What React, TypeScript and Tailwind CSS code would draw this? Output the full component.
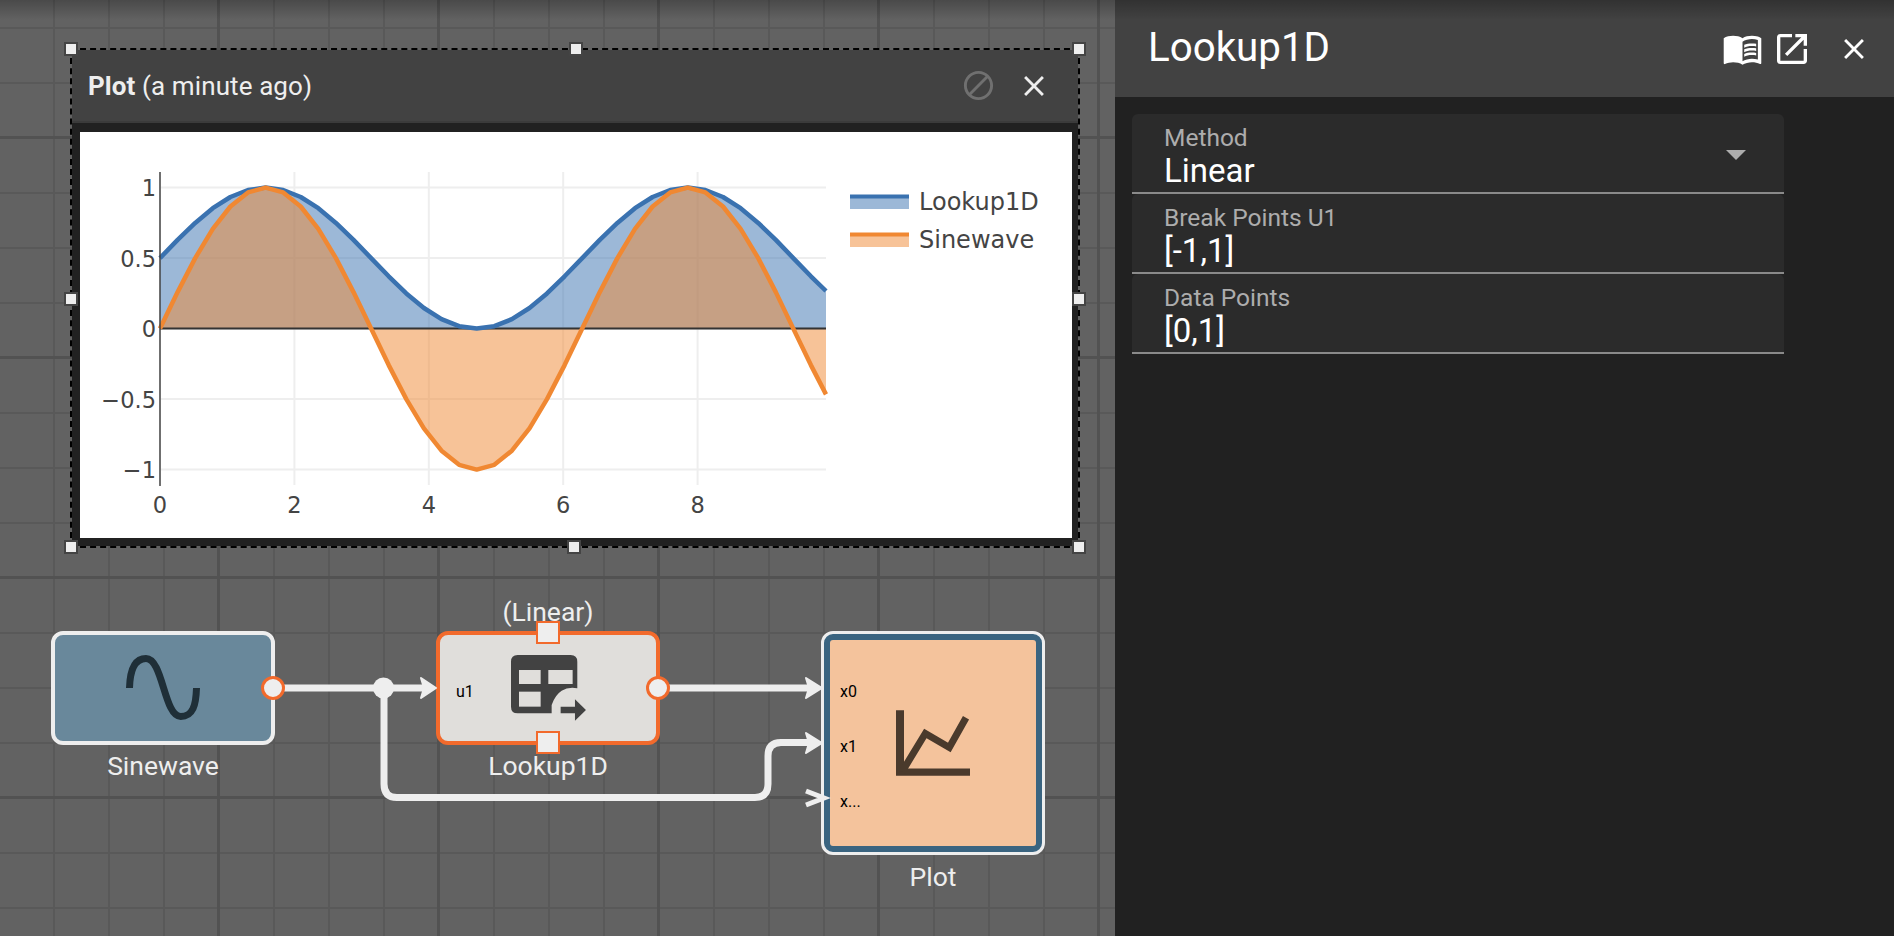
import { useMemo } from "react";

const PLOT_W = 666;
const X0 = 160;
const Y0 = 328.6;
const XS = 67.2;
const YS = 141;

const xTicks = [0, 2, 4, 6, 8];
const yTicks: [number, string][] = [
  [1, "1"],
  [0.5, "0.5"],
  [0, "0"],
  [-0.5, "−0.5"],
  [-1, "−1"],
];

function tracePoints(fn: (t: number) => number) {
  const pts: string[] = [];
  for (let i = 0; i <= 38; i++) {
    const t = Math.min((i * Math.PI) / 12, 9.91);
    pts.push(`${(X0 + t * XS).toFixed(1)},${(Y0 - fn(t) * YS).toFixed(1)}`);
  }
  return pts;
}

function Chart() {
  const sine = useMemo(() => tracePoints((t) => Math.sin(t)), []);
  const lookup = useMemo(() => tracePoints((t) => (Math.sin(t) + 1) / 2), []);
  const end = X0 + PLOT_W;

  const area = (pts: string[]) => `${X0},${Y0} ${pts.join(" ")} ${end},${Y0}`;

  return (
    <svg viewBox="80 132 992 406" className="block h-full w-full" style={{ fontFamily: "'DejaVu Sans', sans-serif" }}>
      {xTicks.map((t) => (
        <line key={t} x1={X0 + t * XS} x2={X0 + t * XS} y1={172} y2={485} stroke="#eeeeee" strokeWidth={2} />
      ))}
      {yTicks.map(([v]) => (
        <line key={v} x1={X0} x2={end} y1={Y0 - v * YS} y2={Y0 - v * YS} stroke="#eeeeee" strokeWidth={2} />
      ))}

      <polygon points={area(lookup)} fill="#3a72b0" fillOpacity={0.5} />
      <polygon points={area(sine)} fill="#f08832" fillOpacity={0.5} />
      <line x1={X0} x2={end} y1={Y0} y2={Y0} stroke="#333333" strokeWidth={2} />
      <polyline points={lookup.join(" ")} fill="none" stroke="#3a72b0" strokeWidth={4.5} strokeLinejoin="round" />
      <polyline points={sine.join(" ")} fill="none" stroke="#f08832" strokeWidth={4.5} strokeLinejoin="round" />

      <line x1={X0} x2={X0} y1={172} y2={486} stroke="#444444" strokeWidth={1.5} />

      {xTicks.map((t) => (
        <text key={t} x={X0 + t * XS} y={512.5} textAnchor="middle" fontSize={22.5} fill="#444444">
          {t}
        </text>
      ))}
      {yTicks.map(([v, label]) => (
        <text key={v} x={156} y={Y0 - v * YS + 8.5} textAnchor="end" fontSize={22.5} fill="#444444">
          {label}
        </text>
      ))}

      <rect x={850} y={195} width={59} height={14} fill="#3a72b0" fillOpacity={0.5} />
      <rect x={850} y={194.5} width={59} height={4} fill="#3a72b0" />
      <text x={919} y={210} fontSize={24} fill="#444444">
        Lookup1D
      </text>
      <rect x={850} y={233} width={59} height={14} fill="#f08832" fillOpacity={0.5} />
      <rect x={850} y={232.5} width={59} height={4} fill="#f08832" />
      <text x={919} y={248} fontSize={24} fill="#444444">
        Sinewave
      </text>
    </svg>
  );
}

function Handle({ className }: { className: string }) {
  return <div className={`absolute h-[14px] w-[14px] -translate-x-1/2 -translate-y-1/2 border-[2.5px] border-[#444444] bg-[#eeeeee] ${className}`} />;
}

function PlotWindow() {
  return (
    <div className="absolute left-[70px] top-[48px] z-20 h-[500px] w-[1010px] border-2 border-dashed border-black">
      <div className="flex h-full flex-col bg-[#212121]">
        <div className="flex h-[73px] items-center bg-[#424242] pb-[2px] pl-[16px] pr-[27px] shadow-[inset_0_-2px_0_#3b3b3b]">
          <div className="flex-1 text-[26px] leading-none tracking-[0.1px] text-[#eeeeee]">
            <span className="font-bold">Plot</span> <span>(a minute ago)</span>
          </div>
          <svg viewBox="0 0 24 24" className="mr-[21px] h-[35px] w-[35px] fill-[#707070]">
            <path d="M12 2C6.48 2 2 6.48 2 12s4.48 10 10 10 10-4.48 10-10S17.52 2 12 2zM4 12c0-4.42 3.58-8 8-8 1.85 0 3.55.63 4.9 1.69L5.69 16.9C4.63 15.55 4 13.85 4 12zm8 8c-1.85 0-3.55-.63-4.9-1.69L18.31 7.1C19.37 8.45 20 10.15 20 12c0 4.42-3.58 8-8 8z" />
          </svg>
          <svg viewBox="0 0 24 24" className="h-[34px] w-[34px] fill-[#eeeeee]">
            <path d="M19 6.41L17.59 5 12 10.59 6.41 5 5 6.41 10.59 12 5 17.59 6.41 19 12 13.41 17.59 19 19 17.59 13.41 12z" />
          </svg>
        </div>
        <div className="mb-2 ml-2 mr-1.5 mt-[9px] flex-1 bg-white">
          <Chart />
        </div>
      </div>
      <Handle className="left-[-1px] top-[-1px]" />
      <Handle className="left-[504px] top-[-1px]" />
      <Handle className="left-[1007px] top-[-1px]" />
      <Handle className="left-[-1px] top-[249px]" />
      <Handle className="left-[1007px] top-[249px]" />
      <Handle className="left-[-1px] top-[497px]" />
      <Handle className="left-[502px] top-[497px]" />
      <Handle className="left-[1007px] top-[497px]" />
    </div>
  );
}

function Wires() {
  return (
    <svg viewBox="0 0 1114 936" className="absolute left-0 top-0 z-10 h-[936px] w-[1114px]">
      <g fill="none" stroke="#eeeeee" strokeWidth={7}>
        <path d="M273 688H425" />
        <path d="M658 688H812" />
        <path d="M384 688V784Q384 797.5 397 797.5H755Q768 797.5 768 784V756Q768 742.5 781 742.5H812" />
        <path d="M806 791L824 798L806 805" strokeWidth={5} />
      </g>
      <g fill="#eeeeee" stroke="#eeeeee" strokeWidth={2} strokeLinejoin="round">
        <path d="M421 678L436 688L421 698L424 688Z" />
        <path d="M806 678L822 688L806 698L809 688Z" />
        <path d="M806 733L822 743L806 753L809 743Z" />
      </g>
      <circle cx={383.5} cy={688} r={10.5} fill="#eeeeee" />
    </svg>
  );
}

function Port() {
  return <div className="absolute right-[-4px] top-[53px] z-20 h-[24px] w-[24px] -translate-y-1/2 translate-x-[10px] rounded-full border-[3px] border-[#f26a2c] bg-[#eeeeee]" />;
}

function SquarePort({ className }: { className: string }) {
  return <div className={`absolute left-[96px] z-20 h-[23px] w-[24px] border-2 border-[#f26a2c] bg-[#eeeeee] ${className}`} />;
}

function Label({ children, className }: { children: string; className: string }) {
  return <div className={`whitespace-nowrap text-[26.5px] leading-[32px] text-[#eeeeee] ${className}`}>{children}</div>;
}

function SinewaveBlock() {
  return (
    <div className="absolute left-[51px] top-[631px] flex w-[224px] flex-col items-center">
      <div className="relative h-[114px] w-full rounded-[12px] border-4 border-[#eeeeee] bg-[#69889b]">
        <svg viewBox="0 0 224 114" className="absolute left-[-4px] top-[-4px] h-[114px] w-[224px]">
          <path
            d="M78.500 57C79 40 83 27.500 95 27.500C112 27.500 113 85.500 129.700 85.500C142 85.500 145 74 145.500 57"
            fill="none"
            stroke="#1f2f38"
            strokeWidth={7}
          />
        </svg>
        <Port />
      </div>
      <Label className="mt-[5px]">Sinewave</Label>
    </div>
  );
}

function LookupBlock() {
  return (
    <div className="absolute left-[436px] top-[596px] flex w-[224px] flex-col items-center">
      <Label className="mb-[3px]">(Linear)</Label>
      <div className="relative flex h-[114px] w-full items-center justify-center rounded-[12px] border-4 border-[#f26a2c] bg-[#e0dedb]">
        <span className="absolute left-[16px] top-[45px] text-[16px] leading-[24px] text-black">u1</span>
        <svg viewBox="273 195 226 198" className="ml-[1px] h-[66px] w-[75.300px]">
          <path
            d="M293 195H452Q472 195 472 215V295Q445 290 425 302Q405 315 395 345V370H293Q273 370 273 350V215Q273 195 293 195Z"
            fill="#424242"
          />
          <rect x={297} y={240} width={65} height={42} fill="#e0dedb" />
          <rect x={385} y={240} width={73} height={42} fill="#e0dedb" />
          <rect x={297} y={305} width={65} height={45} fill="#e0dedb" />
          <path d="M422 350H465V328L498 360L465 392V370H422Z" fill="#424242" />
        </svg>
        <SquarePort className="top-[-14px]" />
        <SquarePort className="bottom-[-13px]" />
        <Port />
      </div>
      <Label className="mt-[5px]">Lookup1D</Label>
    </div>
  );
}

function PlotBlock() {
  return (
    <div className="absolute left-[821px] top-[631px] flex w-[224px] flex-col items-center">
      <div className="h-[224px] w-full rounded-[12px] border-[3.5px] border-[#eeeeee] bg-[#3a6480] p-[6px]">
        <div className="flex h-full w-full items-center rounded-[3px] bg-[#f4c39c] pl-[10px]">
          <div className="mt-[7px] flex w-[55.500px] flex-col gap-[31px] text-[16px] leading-[24px] text-black">
            <span>x0</span>
            <span>x1</span>
            <span>x...</span>
          </div>
          <svg viewBox="348 270 222 197" className="h-[66px] w-[74px]">
            <path d="M348 270H372V445H570V467H348Z" fill="#4a3a2c" />
            <path d="M366 455L436 340L508 382L558 293" fill="none" stroke="#4a3a2c" strokeWidth={21} />
          </svg>
        </div>
      </div>
      <Label className="mt-[6px]">Plot</Label>
    </div>
  );
}

function Field({ label, value }: { label: string; value: string }) {
  return (
    <div className="h-[80px] rounded-t-[6px] border-b-2 border-[#8a8a8a] bg-[#2b2b2b] pl-[32px] pr-5 pt-[9px]">
      <div className="mb-[1px] text-[24.500px] leading-[29px] text-[#adadad]">{label}</div>
      <div className="text-[33px] leading-[36px] text-white">{value}</div>
    </div>
  );
}

export default function App() {
  return (
    <div className="relative flex h-[936px] w-[1894px] overflow-hidden font-['Roboto',sans-serif]">
      <div className="relative h-full w-[1115px] bg-[#626262] bg-[linear-gradient(to_right,#525252_3px,transparent_3px),linear-gradient(to_bottom,#525252_3px,transparent_3px),linear-gradient(to_right,#595959_2px,transparent_2px),linear-gradient(to_bottom,#595959_2px,transparent_2px)] bg-[size:220px_220px,220px_220px,55px_55px,55px_55px] bg-[position:-3px_136px,0_136px,-2px_27px,0_27px]">
        <SinewaveBlock />
        <LookupBlock />
        <PlotBlock />
        <Wires />
        <PlotWindow />
      </div>

      <div className="flex h-full flex-1 flex-col bg-[#212121]">
        <div className="flex h-[97px] items-center bg-[#424242] pl-[33px] pr-[23px]">
          <div className="flex-1 text-[40.300px] leading-none text-white">Lookup1D</div>
          <svg viewBox="0 0 24 24" className="h-[41px] w-[41px] fill-white">
            <path d="M21 5c-1.11-.35-2.33-.5-3.5-.5-1.95 0-4.05.4-5.5 1.5-1.45-1.1-3.55-1.5-5.5-1.5S2.450 4.900 1 6v14.650c0 .25.25.5.5.5.1 0 .15-.05.25-.05C3.100 20.450 5.050 20 6.500 20c1.950 0 4.050.4 5.500 1.500 1.350-.85 3.800-1.500 5.500-1.500 1.650 0 3.350.3 4.750 1.050.1.05.15.05.25.05.25 0 .5-.25.5-.5V6c-.6-.45-1.250-.75-2-1zm0 13.500c-1.100-.35-2.300-.5-3.500-.5-1.700 0-4.150.65-5.500 1.500V8c1.350-.85 3.800-1.500 5.500-1.500 1.200 0 2.400.15 3.500.5v11.500z" />
            <path d="M17.500 10.500c.88 0 1.730.09 2.500.26V9.240c-.79-.15-1.640-.24-2.500-.24-1.700 0-3.240.29-4.500.83v1.660c1.130-.64 2.700-.99 4.500-.99zM13 12.490v1.660c1.130-.64 2.700-.99 4.500-.99.88 0 1.730.09 2.500.26V11.900c-.79-.15-1.640-.24-2.500-.24-1.700 0-3.240.3-4.500.83zM17.500 14.330c-1.700 0-3.240.29-4.500.83v1.660c1.130-.64 2.700-.99 4.500-.99.88 0 1.730.09 2.500.26v-1.520c-.79-.16-1.640-.24-2.500-.24z" />
          </svg>
          <svg viewBox="0 0 24 24" className="ml-[9px] h-[40px] w-[40px] fill-white">
            <path d="M19 19H5V5h7V3H5c-1.110 0-2 .9-2 2v14c0 1.100.89 2 2 2h14c1.100 0 2-.9 2-2v-7h-2v7zM14 3v2h3.590l-9.830 9.830 1.410 1.410L19 6.410V10h2V3h-7z" />
          </svg>
          <svg viewBox="0 0 24 24" className="ml-[25px] h-[34px] w-[34px] fill-white">
            <path d="M19 6.410L17.590 5 12 10.590 6.410 5 5 6.410 10.590 12 5 17.590 6.410 19 12 13.410 17.590 19 19 17.590 13.410 12z" />
          </svg>
        </div>
        <div className="ml-[17px] mt-[17px] w-[652px]">
          <div className="relative">
            <Field label="Method" value="Linear" />
            <div className="absolute right-[38px] top-[36px] h-0 w-0 border-x-[10px] border-t-[10px] border-x-transparent border-t-[#adadad]" />
          </div>
          <Field label="Break Points U1" value="[-1,1]" />
          <Field label="Data Points" value="[0,1]" />
        </div>
      </div>

      <div className="pointer-events-none absolute left-0 top-0 z-30 h-[20px] w-full bg-gradient-to-b from-black/25 to-transparent" />
    </div>
  );
}
